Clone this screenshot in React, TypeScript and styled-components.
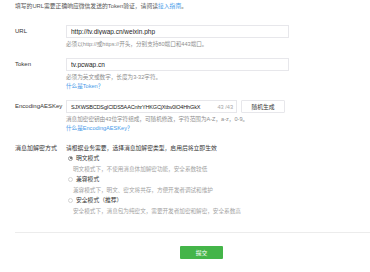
import React from "react";
import styled, { createGlobalStyle } from "styled-components";

const GlobalStyle = createGlobalStyle`
  body {
    margin: 0;
    background: #fff;
    font-family: "Liberation Sans", "Noto Sans CJK SC", sans-serif;
    color: #353535;
  }
`;

const Page = styled.div`
  width: 370px;
  height: 272px;
  overflow: hidden;
  padding: 2px 0 0 15px;
  box-sizing: border-box;
`;

const Intro = styled.p`
  margin: 0;
  font-size: 5.8px;
  line-height: 9px;
  color: #555;
`;

const Link = styled.a`
  color: #459ae9;
  text-decoration: none;
`;

const Form = styled.div`
  margin-top: 14px;
  display: flex;
  flex-direction: column;
`;

const Row = styled.div<{ $gap?: number }>`
  display: grid;
  grid-template-columns: 51px 1fr;
  margin-top: ${(p) => p.$gap ?? 0}px;
`;

const Label = styled.div<{ $lh?: number }>`
  font-size: 6px;
  line-height: ${(p) => p.$lh ?? 13}px;
  color: #353535;
  white-space: nowrap;
`;

const Controls = styled.div`
  display: flex;
  flex-direction: column;
`;

const InputLine = styled.div`
  display: flex;
  gap: 4px;
`;

const InputBox = styled.div<{ $w: number }>`
  width: ${(p) => p.$w}px;
  height: 13px;
  box-sizing: border-box;
  border: 1px solid #e7e7eb;
  padding: 0 3px 0 4px;
  display: flex;
  align-items: center;
  font-size: 6.5px;
  color: #222;
  overflow: hidden;
  white-space: nowrap;
`;

const InputText = styled.span<{ $small?: boolean }>`
  flex: 1;
  overflow: hidden;
  font-size: ${(p) => (p.$small ? "5.5px" : "inherit")};
  letter-spacing: ${(p) => (p.$small ? "-0.15px" : "normal")};
`;

const Counter = styled.span`
  color: #a6a6a6;
  margin-left: 1px;
  font-size: 5.6px;
  flex: none;
`;

const Button = styled.button`
  width: 44px;
  height: 13px;
  box-sizing: border-box;
  border: 1px solid #e7e7eb;
  background: #fff;
  font-family: inherit;
  font-size: 5.8px;
  color: #353535;
  padding: 0;
  border-radius: 1px;
`;

const Hint = styled.div<{ $top?: number }>`
  margin-top: ${(p) => p.$top ?? 0}px;
  font-size: 5.6px;
  line-height: 9px;
  color: #8d8d8d;
  white-space: nowrap;
`;

const HintLink = styled(Hint)`
  color: #459ae9;
`;

const Lead = styled.div`
  font-size: 5.8px;
  line-height: 10px;
  color: #353535;
  white-space: nowrap;
`;

const Option = styled.label`
  display: flex;
  align-items: center;
  gap: 3px;
  font-size: 5.8px;
  line-height: 10.5px;
  color: #353535;
  padding-left: 2px;
`;

const Radio = styled.span<{ $on?: boolean }>`
  width: 5px;
  height: 5px;
  box-sizing: border-box;
  border-radius: 50%;
  border: 1px solid ${(p) => (p.$on ? "#9a9a9a" : "#d4d4d4")};
  display: flex;
  align-items: center;
  justify-content: center;
  &::after {
    content: "";
    width: 2px;
    height: 2px;
    border-radius: 50%;
    background: ${(p) => (p.$on ? "#555" : "transparent")};
  }
`;

const OptionDesc = styled.div`
  padding-left: 7px;
  font-size: 5.6px;
  line-height: 10.5px;
  color: #a3a3a3;
  white-space: nowrap;
`;

const Footer = styled.div`
  margin-top: 16px;
  border-top: 1px solid #ececec;
  padding: 8px 0 0 165px;
`;

const Submit = styled.button`
  width: 43px;
  height: 13px;
  border: none;
  border-radius: 1px;
  background: #44b549;
  color: #fff;
  font-family: inherit;
  font-size: 5.8px;
  padding: 0;
`;

const modes = [
  { name: "明文模式", desc: "明文模式下，不使用消息体加解密功能，安全系数较低", on: true },
  { name: "兼容模式", desc: "兼容模式下，明文、密文将共存，方便开发者调试和维护", on: false },
  { name: "安全模式（推荐）", desc: "安全模式下，消息包为纯密文，需要开发者加密和解密，安全系数高", on: false },
];

const App = () => {
  return (
    <Page>
      <GlobalStyle />
      <Intro>
        填写的URL需要正确响应微信发送的Token验证，请阅读<Link>接入指南</Link>。
      </Intro>
      <Form>
        <Row>
          <Label>URL</Label>
          <Controls>
            <InputBox $w={223}>
              <InputText>http://tv.diywap.cn/weixin.php</InputText>
            </InputBox>
            <Hint $top={2}>必须以http://或https://开头，分别支持80端口和443端口。</Hint>
          </Controls>
        </Row>
        <Row $gap={9}>
          <Label>Token</Label>
          <Controls>
            <InputBox $w={223}>
              <InputText>tv.pcwap.cn</InputText>
            </InputBox>
            <Hint $top={2}>必须为英文或数字，长度为3-32字符。</Hint>
            <HintLink>什么是Token？</HintLink>
          </Controls>
        </Row>
        <Row $gap={9}>
          <Label>EncodingAESKey</Label>
          <Controls>
            <InputLine>
              <InputBox $w={171}>
                <InputText $small>SJXWSBCDSgICIDS5AACnhrYHKGCjXtbv0lO4HhGkX</InputText>
                <Counter>43 /43</Counter>
              </InputBox>
              <Button>随机生成</Button>
            </InputLine>
            <Hint $top={2}>消息加密密钥由43位字符组成，可随机修改，字符范围为A-Z，a-z，0-9。</Hint>
            <HintLink>什么是EncodingAESKey？</HintLink>
          </Controls>
        </Row>
        <Row $gap={10}>
          <Label $lh={10}>消息加解密方式</Label>
          <Controls>
            <Lead>请根据业务需要，选择消息加解密类型，启用后将立即生效</Lead>
            {modes.map((m) => (
              <React.Fragment key={m.name}>
                <Option>
                  <Radio $on={m.on} />
                  {m.name}
                </Option>
                <OptionDesc>{m.desc}</OptionDesc>
              </React.Fragment>
            ))}
          </Controls>
        </Row>
      </Form>
      <Footer>
        <Submit>提交</Submit>
      </Footer>
    </Page>
  );
};

export default App;
